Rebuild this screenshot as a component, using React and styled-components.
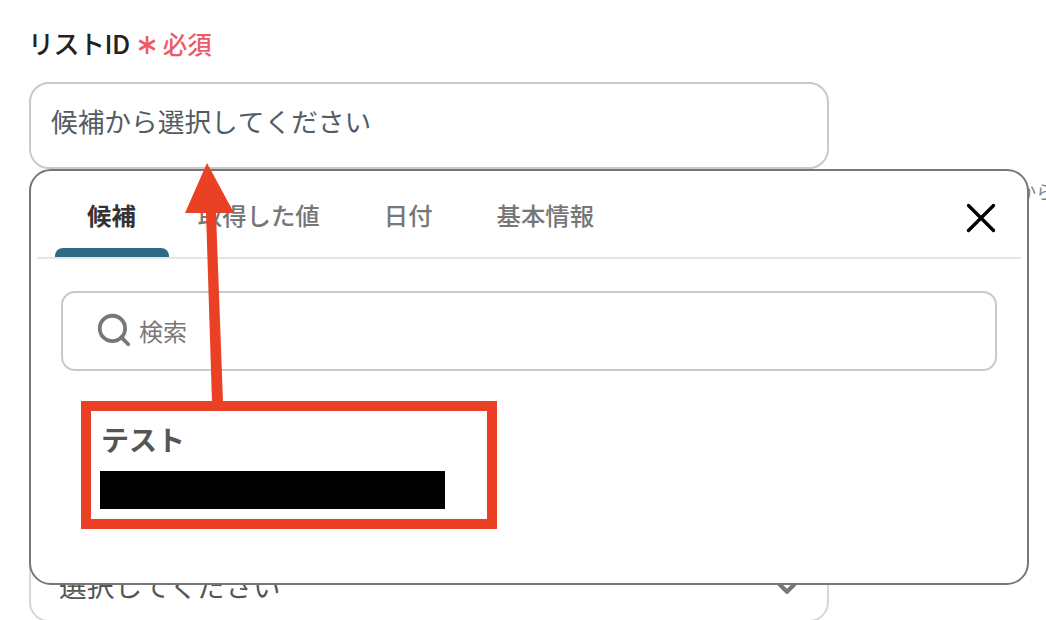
import React from "react";
import styled, { createGlobalStyle } from "styled-components";
import { X, Search, ChevronDown } from "lucide-react";

const GlobalStyle = createGlobalStyle`
  html, body {
    margin: 0;
    padding: 0;
    background: #fff;
    overflow: hidden;
  }
  body {
    font-family: "Noto Sans CJK JP", "Noto Sans", sans-serif;
    font-kerning: none;
  }
`;

const Page = styled.div`
  position: relative;
  width: 1046px;
  height: 620px;
  overflow: hidden;
  background: #fff;
  padding: 27px 0 0 30px;
  box-sizing: border-box;
`;

const LabelRow = styled.div`
  display: flex;
  align-items: center;
  height: 30px;
  margin-left: -2px;
  margin-bottom: 25px;
`;

const LabelText = styled.span`
  font-size: 26px;
  font-weight: 500;
  color: #222;
  letter-spacing: -0.5px;
`;

const Required = styled.span`
  display: flex;
  align-items: center;
  margin-left: 7px;
  margin-top: 3px;
  color: #ee5a68;
  font-size: 24.5px;
  font-weight: 500;
`;

const Asterisk = styled.svg`
  width: 20px;
  height: 20px;
  margin-right: 6px;
  margin-top: 3px;
`;

const Field = styled.div`
  box-sizing: border-box;
  width: 800px;
  height: 87px;
  margin-left: -1px;
  padding: 0 20px 10px;
  display: flex;
  align-items: center;
  justify-content: space-between;
  border: 2px solid #c9c9c9;
  border-radius: 20px;
  font-size: 26.7px;
  color: #555b63;
  white-space: nowrap;
`;

const HelpText = styled.div`
  height: 38px;
  margin-top: 3px;
  font-size: 18px;
  line-height: 38px;
  color: #7b8790;
  white-space: nowrap;
  text-align: right;
  width: 1024px;
`;

const SelectField = styled(Field)`
  height: 81px;
  margin-top: 331px;
  padding: 27px 25px 0 28px;
  align-items: flex-start;
  border-color: #d3d8dc;
  color: #555;
  font-size: 27.7px;
  line-height: 30px;
`;

const Popup = styled.div`
  position: absolute;
  left: 29px;
  top: 169px;
  box-sizing: border-box;
  width: 1000px;
  height: 416px;
  background: #fff;
  border: 2px solid #777;
  border-radius: 22px;
  padding: 0 6px;
`;

const TabBar = styled.div`
  display: flex;
  align-items: stretch;
  height: 88px;
  border-bottom: 2px solid #e5e5e5;
  padding-left: 18px;
  box-sizing: border-box;
`;

const Tab = styled.div`
  position: relative;
  display: flex;
  align-items: center;
  padding: ${(p) => (p.$active ? "0 33px 0 32px" : "0 32px")};
  margin-right: ${(p) => (p.$active ? "-3px" : "0")};
  font-size: 24.4px;
  font-weight: ${(p) => (p.$active ? 700 : 500)};
  color: ${(p) => (p.$active ? "#333" : "#777")};

  ${(p) =>
    p.$active &&
    `
    &::after {
      content: "";
      position: absolute;
      left: 0;
      right: 0;
      bottom: 0;
      height: 9px;
      background: #2f6a85;
      border-radius: 8px 8px 0 0;
    }
  `}
`;

const CloseButton = styled.div`
  margin-left: auto;
  margin-right: 15px;
  display: flex;
  align-items: center;
  padding-top: 8px;
  color: #000;
`;

const SearchBox = styled.div`
  box-sizing: border-box;
  display: flex;
  align-items: center;
  gap: 6px;
  height: 80px;
  margin: 32px 24px 0;
  padding: 0 0 2px 32px;
  border: 2px solid #c9c9c9;
  border-radius: 14px;
  color: #777;
  font-size: 24px;
`;

const Option = styled.div`
  margin: 50px 0 0 63px;
`;

const OptionTitle = styled.div`
  font-size: 28px;
  font-weight: 700;
  line-height: 36px;
  color: #555;
  margin-left: 1px;
`;

const Redacted = styled.div`
  width: 345px;
  height: 38px;
  margin-top: 14px;
  background: #000;
`;

const RedFrame = styled.div`
  position: absolute;
  left: 81px;
  top: 401px;
  box-sizing: border-box;
  width: 416px;
  height: 128px;
  border: 10px solid #ea4125;
`;

const ArrowOverlay = styled.svg`
  position: absolute;
  left: 0;
  top: 0;
  width: 1046px;
  height: 620px;
  pointer-events: none;
`;

const SelectChevron = styled(ChevronDown)`
  margin-top: 3px;
`;

export default function App() {
  const tabs = ["候補", "取得した値", "日付", "基本情報"];

  return (
    <Page>
      <GlobalStyle />
      <LabelRow>
        <LabelText>リストID</LabelText>
        <Required>
          <Asterisk viewBox="0 0 20 20">
            <path
              d="M10 1v18M2.2 5.5l15.6 9M17.8 5.5l-15.6 9"
              stroke="#ee5a68"
              strokeWidth="2.6"
              fill="none"
            />
          </Asterisk>
          必須
        </Required>
      </LabelRow>
      <Field>候補から選択してください</Field>
      <HelpText>から</HelpText>
      <SelectField>
        選択してください
        <SelectChevron size={30} strokeWidth={3.4} color="#777" />
      </SelectField>

      <Popup>
        <TabBar>
          {tabs.map((t, i) => (
            <Tab key={t} $active={i === 0}>
              {t}
            </Tab>
          ))}
          <CloseButton>
            <X size={50} strokeWidth={1.6} />
          </CloseButton>
        </TabBar>
        <SearchBox>
          <Search size={38} strokeWidth={2.4} />
          検索
        </SearchBox>
        <Option>
          <OptionTitle>テスト</OptionTitle>
          <Redacted />
        </Option>
      </Popup>

      <RedFrame />
      <ArrowOverlay viewBox="0 0 1046 620">
        <polygon
          points="207,163 234,213 216,213 223,402 212,402 206,213 185,213"
          fill="#ea4125"
        />
      </ArrowOverlay>
    </Page>
  );
}
